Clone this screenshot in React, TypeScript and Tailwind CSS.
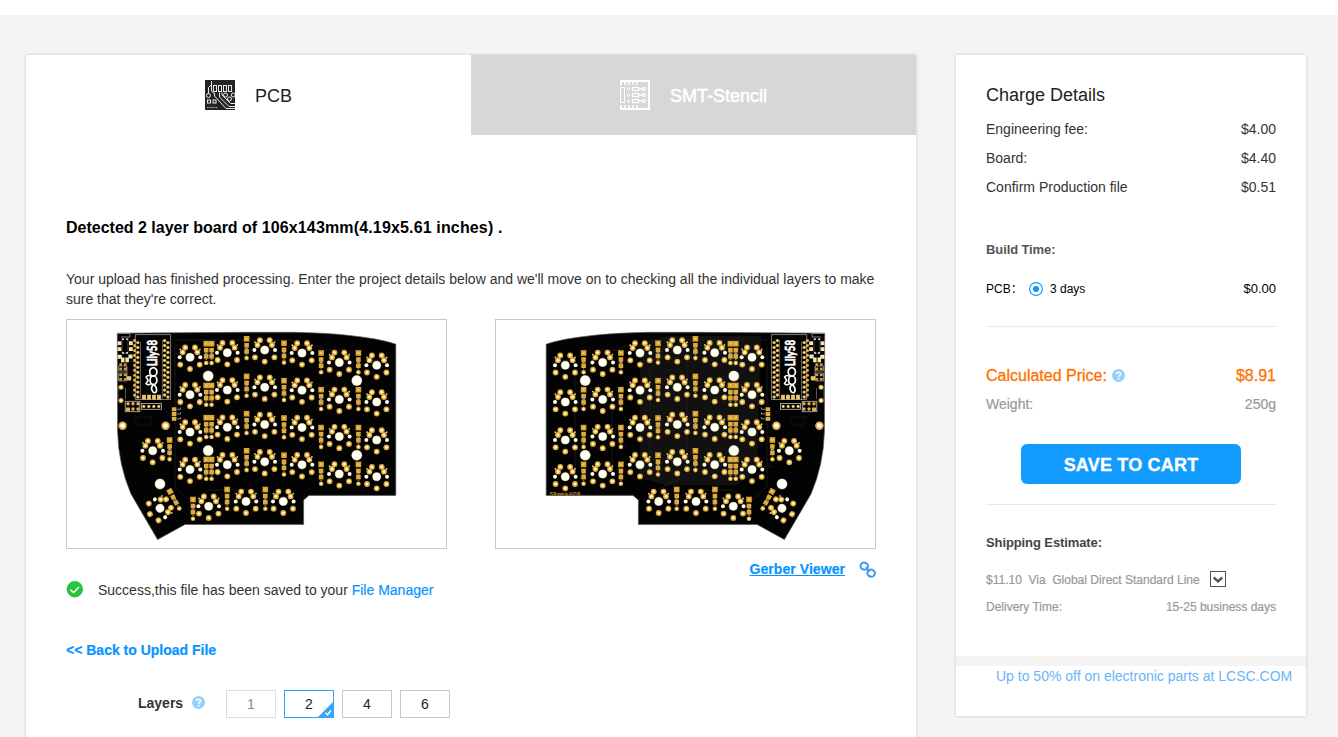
import type { ReactNode } from "react";

type Point = [number, number];

const KEYS: Point[] = [
  [190, 357.3], [190, 394.7], [190, 432], [190, 469.5],
  [227.3, 352.7], [227.3, 390], [227.3, 427.3], [227.3, 464.7],
  [264.7, 350], [264.7, 387.3], [264.7, 424.5], [264.7, 461.8],
  [302, 353], [302, 390.2], [302, 427.5], [302, 464.8],
  [339.3, 362.4], [339.3, 399.4], [339.3, 436.6], [339.3, 474],
  [376.7, 365.2], [376.7, 402], [376.7, 440], [376.7, 476.7],
  [208.7, 506.3], [246, 501.4], [283.3, 501.4], [152.7, 450.7],
];

const DIODES: Point[] = [
  [206.2, 343.7], [206.2, 385.5], [206.2, 417.7], [206.2, 459.5],
  [211.6, 343.7], [211.6, 385.5], [211.6, 417.7], [211.6, 459.5],
  [246.6, 338.8], [246.6, 376.4], [246.6, 413.7], [246.6, 450.8],
  [284, 343.3], [284, 380.7], [284, 418], [284, 455.2],
  [321.1, 353], [321.1, 389.7], [321.1, 427.6], [321.1, 464.4],
  [358.4, 353], [358.4, 389.7], [358.4, 427.6], [358.4, 464.4],
  [193, 499.5], [227.1, 489.5], [265.3, 489.5], [169.6, 440],
];

const HOLES: Point[] = [[208.2, 376], [356.8, 380.6], [356.8, 455.2], [208.2, 450.6], [160, 484]];
const MOUNTS: Point[] = [[122.6, 425.7], [165.6, 425.7]];
const PADS: Point[] = [[-4.8, -9.8], [5, -9.8], [-7.3, -5], [7.3, -5], [-9.7, 7.3], [9.7, 7.3], [0, 11.6]];

function Pad({ x, y, r = 2.9 }: { x: number; y: number; r?: number }) {
  return (
    <g>
      <circle cx={x} cy={y} r={r} fill="#dda935" />
      <circle cx={x} cy={y} r={r * 0.5} fill="#fff6da" />
    </g>
  );
}

function Switch({ x, y, rotate = 0 }: { x: number; y: number; rotate?: number }) {
  return (
    <g transform={`translate(${x} ${y}) rotate(${rotate})`}>
      <circle r="4.6" fill="#8c8556" />
      <circle r="4" fill="#fffff4" />
      <circle cx="-10.3" r="2" fill="#fffff4" />
      <circle cx="10.3" r="2" fill="#fffff4" />
      <circle cx="-9.7" cy="-7.8" r="0.9" fill="#e0d590" />
      <circle cx="9.9" cy="-7.8" r="0.9" fill="#e0d590" />
      {PADS.map(([px, py]) => <Pad key={`${px},${py}`} x={px} y={py} />)}
    </g>
  );
}

function Diode({ x, y, rotate = 0 }: { x: number; y: number; rotate?: number }) {
  return (
    <g transform={`translate(${x} ${y}) rotate(${rotate})`}>
      <rect x="-2.8" y="-2.8" width="5.6" height="5.6" fill="#d9a432" />
      <rect x="-1" y="-1" width="2" height="2" fill="#f0c766" />
      <rect x="-2.3" y="4.2" width="4.6" height="4.6" fill="#deaa3a" />
      <rect x="-1.4" y="9.1" width="2.8" height="0.9" fill="#c9ccd6" />
      <rect x="-2.3" y="10.4" width="4.6" height="4.6" fill="#deaa3a" />
      <rect x="-0.8" y="15.4" width="1.6" height="1" fill="#8d8f99" />
      <Pad x={0} y={19.3} r={2.3} />
    </g>
  );
}

function Controller() {
  const rows = Array.from({ length: 12 }, (_, i) => 342.6 + i * 4.95);
  return (
    <g>
      <path d="M135.3 399.5V334.6H170.6V399.5H135.3" fill="none" stroke="#9a9a9a" strokeWidth="0.8" />
      <path d="M140.5 399V342M162.4 399V340" stroke="#888" strokeWidth="0.7" />
      {rows.map((y) => (
        <g key={y} fill="#dfb04a">
          <circle cx="134.6" cy={y - 2} r="1.6" />
          <circle cx="137.8" cy={y} r="1.7" />
          <circle cx="164.6" cy={y - 2} r="1.7" />
          <circle cx="167.9" cy={y} r="1.7" />
          <circle cx="137.8" cy={y} r="0.6" fill="#fff" />
          <circle cx="167.9" cy={y} r="0.6" fill="#fff" />
          <circle cx="164.6" cy={y - 2} r="0.6" fill="#fff" />
        </g>
      ))}
      {[144, 149, 154, 159].map((x) => <rect key={x} x={x - 1.9} y="394.8" width="3.8" height="4.8" fill="#ecc872" />)}

      <path d="M117.5 333.5H130V337H121" fill="none" stroke="#999" strokeWidth="0.8" />
      <path d="M122 338V353H128V338" fill="none" stroke="#666" strokeWidth="0.7" />
      <g fill="#f8e3ab">
        <rect x="117.6" y="341.3" width="3.8" height="3.8" />
        <rect x="117.6" y="347.2" width="3.8" height="3.8" />
        <rect x="117.6" y="354.8" width="4.2" height="4" />
        <rect x="129" y="341.3" width="3.8" height="3.8" />
        <rect x="129" y="347.2" width="3.8" height="3.8" />
        <rect x="128.4" y="354.5" width="4.2" height="4" />
        <rect x="121" y="357.5" width="3.5" height="4.8" />
        <rect x="125.4" y="357.5" width="3.5" height="4.8" />
      </g>
      <g fill="#fff">
        <circle cx="123" cy="339.2" r="0.9" /><circle cx="127" cy="339.2" r="0.9" />
        <circle cx="123" cy="353" r="0.9" /><circle cx="127" cy="353" r="0.9" />
      </g>
      <path d="M118.5 366h8v5h-8zM118.5 373h8v8h-8zM127 366v14" fill="none" stroke="#8f8f8f" strokeWidth="0.8" />
      {[364.5, 368.8, 374.8, 379.2].map((y) => (
        <g key={y} fill="#cf9f3c">
          <rect x="119.3" y={y - 1.2} width="2.8" height="2.6" />
          <rect x="123.8" y={y - 1.2} width="2.8" height="2.6" />
        </g>
      ))}
      <rect x="127" y="376.2" width="4.2" height="4.2" fill="#f0c766" />
      <path d="M118 386V402M125.5 388V399" stroke="#777" strokeWidth="0.7" />
      <Pad x={121} y={387.3} r={2.5} />
      <Pad x={121} y={400.5} r={2.5} />

      <rect x="125.2" y="401.3" width="14.6" height="10.4" fill="none" stroke="#bcbcbc" strokeWidth="0.8" />
      <rect x="141.5" y="403.5" width="20" height="5.8" fill="none" stroke="#bcbcbc" strokeWidth="0.8" />
      {[128, 133, 138].map((x) => (
        <g key={x} fill="#e0b04a">
          <circle cx={x} cy="403.8" r="1.7" />
          {x === 128 ? <rect x="126" y="407.5" width="4" height="3.6" /> : <circle cx={x} cy="409" r="1.7" />}
        </g>
      ))}
      {[143.8, 148.8, 153.8, 158.8].map((x) => <Pad key={x} x={x} y={406.4} r={1.6} />)}
      {[409.3, 414, 418.8].map((y) => (
        <g key={y}>
          <rect x="171.8" y={y - 2} width="4.6" height="4" fill="#dfaf47" />
          <path d={`M177 ${y}h3.6v-1.8`} fill="none" stroke="#aaa" strokeWidth="0.8" />
        </g>
      ))}
    </g>
  );
}

function Logo({ x }: { x: number }) {
  return (
    <g transform={`translate(${x} 366) rotate(-90)`}>
      <text x="0" y="0" fill="#fff" stroke="#fff" strokeWidth="0.7" fontSize="13.5" textLength="26" lengthAdjust="spacingAndGlyphs" className="font-[Lato,sans-serif] font-bold">Lily58</text>
      <g fill="none" stroke="#fff" strokeWidth="1.7">
        <ellipse cx="-5.8" cy="-3.2" rx="4.2" ry="3.6" />
        <ellipse cx="-14.2" cy="-3" rx="4.2" ry="3.4" />
        <path d="M-18.4-3Q-22-6.6-25.8-3.6Q-28-1-25 0Q-21 .5-18.4-3" />
        <path d="M-17.6-5.5Q-20-8.5-17.5-10.5L-14.5-8.3L-11-10.4Q-8.3-8.6-10.4-5.4" strokeWidth="1.5" />
      </g>
    </g>
  );
}

function Board({ back = false }: { back?: boolean }) {
  return (
    <svg width="379" height="228" viewBox={back ? "496 320 379 228" : "67 320 379 228"} className="block">
      <g transform={back ? "translate(942 0) scale(-1 1)" : undefined}>
        <path
          d="M117.3 333.2L240 332.3H294Q325 333 345 335Q380 338.5 395.8 344.2V495.4H309L303.6 500V524.4H185L157.6 539.6L131 494Q118.5 465 117.6 432Z"
          fill="#030303"
          stroke="#555"
          strokeWidth="0.7"
        />
        {back && (
          <>
            <path d="M181 336H272L302 342V478L275 485H205L185 470Z" fill="#111" />
            <path d="M209 350V380M255 355V475L285 490M292 370V470M367 372V472M330 400V470M185 466H170" fill="none" stroke="#202020" strokeWidth="0.8" />
          </>
        )}
        <path d="M175 345V487L188 499H200L208 490H255M175 340H290L304 346H318L325 350H345" fill="none" stroke="#191919" strokeWidth="1" />
        <path d="M166 411L172 418M135 417h16v8h-12z" fill="none" stroke="#171717" strokeWidth="0.8" />
        {KEYS.map(([x, y]) => <Switch key={`${x},${y}`} x={x} y={y} />)}
        <Switch x={160} y={508.3} rotate={60} />
        {DIODES.map(([x, y]) => <Diode key={`${x},${y}`} x={x} y={y} />)}
        <Diode x={170} y={491.5} rotate={-28.6} />
        {HOLES.map(([x, y]) => (
          <g key={`${x},${y}`}>
            <circle cx={x} cy={y} r="5.5" fill="#77734f" />
            <circle cx={x} cy={y} r="5" fill="#fffff5" />
          </g>
        ))}
        {MOUNTS.map(([x, y]) => (
          <g key={`${x},${y}`}>
            <circle cx={x} cy={y} r="4.2" fill="#e1b14c" />
            <circle cx={x} cy={y} r="2.4" fill="#fffdf0" />
          </g>
        ))}
        <Controller />
      </g>
      <Logo x={back ? 795 : 156.5} />
      {back && <text x="550" y="494.6" fill="#e0a61e" fontSize="4" textLength="30" lengthAdjust="spacingAndGlyphs" className="font-['Liberation_Sans',sans-serif] font-bold">PCB made by JLCPCB</text>}
    </svg>
  );
}

function Help({ className = "" }: { className?: string }) {
  return (
    <svg width="13" height="13" viewBox="0 0 13 13" className={className}>
      <circle cx="6.5" cy="6.5" r="6.5" fill="#94d0fb" />
      <path d="M4.5 5.1C4.5 2.6 8.6 2.6 8.6 5C8.6 6.4 6.6 6.3 6.6 7.9" fill="none" stroke="#fff" strokeWidth="1.6" />
      <rect x="5.7" y="8.9" width="1.8" height="1.6" fill="#fff" />
    </svg>
  );
}

function PcbIcon() {
  return (
    <svg width="30" height="30" viewBox="0 0 30 30">
      <rect width="30" height="30" fill="#242424" />
      <g fill="none" stroke="#e9e9e9" strokeWidth="1">
        <path d="M3.5 13.5V7.5L6.5 4.5V1M14.5 12.5V17L24 26.5H30M9.5 13V16L21 28.5H30M17 12.5V15L25.5 23.5H30M6.5 4V11L9.5 14" />
        <rect x="8.5" y="5.5" width="3" height="6" /><rect x="13.5" y="5.5" width="3" height="6" />
        <rect x="18.5" y="5.5" width="3" height="6" /><rect x="23.5" y="5.5" width="3" height="6" />
        <circle cx="3.5" cy="15.5" r="2" /><circle cx="20.5" cy="15" r="2" /><circle cx="28.3" cy="15" r="2" /><circle cx="24.5" cy="19" r="2" />
        <rect x="2.5" y="20" width="3" height="3" /><rect x="8" y="20" width="3" height="3" />
      </g>
      <path d="M2 27.5H13" stroke="#aaa" strokeWidth="1" strokeDasharray="1.5 .7" />
    </svg>
  );
}

function StencilIcon() {
  return (
    <svg width="30" height="30" viewBox="0 0 30 30" fill="none" stroke="#fff">
      <path d="M1 5V1H29V29H1V25" strokeWidth="2" />
      <path d="M5 2V5M9 2V5M13 2V5M17 2V5M5 25V28M9 25V28M13 25V28M17 25V28" strokeWidth="1.5" />
      <rect x="0.5" y="7.5" width="4" height="15" />
      {[9, 15, 21].map((y) => (
        <g key={y}>
          <circle cx="8.5" cy={y} r="1.2" strokeWidth="0.9" />
          <rect x="12.5" y={y - 1.5} width="6" height="3" strokeWidth="1.2" />
          <path d={`M19 ${y}H23`} strokeWidth="1.4" />
          <circle cx="24" cy={y} r="1.4" strokeWidth="1.2" />
        </g>
      ))}
    </svg>
  );
}

function Row({ label, value, className = "" }: { label: ReactNode; value: ReactNode; className?: string }) {
  return (
    <div className={`flex justify-between ${className}`}>
      <span>{label}</span>
      <span>{value}</span>
    </div>
  );
}

function LayerOption({ value, selected = false, disabled = false }: { value: number; selected?: boolean; disabled?: boolean }) {
  const tone = selected ? "border-[#2ea3f7] text-[#222]" : disabled ? "border-[#dcdcdc] text-[#888]" : "border-[#c8c8c8] text-[#222]";
  return (
    <button className={`relative h-7 w-[50px] border bg-white text-sm leading-[27px] ${tone}`}>
      {value}
      {selected && (
        <svg width="17" height="17" viewBox="0 0 17 17" className="absolute -right-px -bottom-px">
          <path d="M17 0V17H0Z" fill="#35a7fa" />
          <path d="M8.5 11.8L10.5 13.8L14 9.5" fill="none" stroke="#fff" strokeWidth="1.5" />
        </svg>
      )}
    </button>
  );
}

function MainPanel() {
  return (
    <main className="h-[700px] w-[890px] shrink-0 bg-white shadow-[0_0_3px_rgba(0,0,0,0.2)]">
      <nav className="flex h-20 text-lg">
        <div className="flex w-[445px] items-center gap-5 pl-[179px] text-[#222]"><PcbIcon /><span className="pt-0.5">PCB</span></div>
        <div className="flex w-[445px] items-center gap-5 bg-[#d7d7d7] pl-[149px] text-white"><StencilIcon /><span className="pt-0.5 [-webkit-text-stroke:0.5px_white]">SMT-Stencil</span></div>
      </nav>
      <div className="px-10 pt-[83px]">
        <h1 className="text-base leading-5 font-bold whitespace-nowrap text-black">
          Detected 2 layer board of <span className="tracking-[0.15px]">106x143mm(4.19x5.61 inches) .</span>
        </h1>
        <p className="mt-[31px] text-sm leading-5 whitespace-nowrap">
          Your upload has finished processing. Enter the project details below and we'll move on to checking all the individual layers to make<br />
          sure that they're correct.
        </p>
        <div className="mt-[10px] flex justify-between">
          <div className="border border-[#c8c8c8]"><Board /></div>
          <div className="border border-[#c8c8c8]"><Board back /></div>
        </div>
        <div className="flex h-[60px] justify-between text-sm">
          <div className="flex items-center gap-[15px] pt-[21px]">
            <svg width="17" height="17" viewBox="0 0 17 17">
              <circle cx="8.8" cy="8.3" r="8.2" fill="#2bc23f" />
              <path d="M4.4 8.7L7.6 11.6L13 6" fill="none" stroke="#fff" strokeWidth="1.4" />
            </svg>
            <span>Success,this file has been saved to your <a className="text-[#0695ff] [-webkit-text-stroke:0.2px_#0695ff]">File Manager</a></span>
          </div>
          <div className="flex h-10 items-center gap-[14px]">
            <a className="font-bold tracking-[0.06px] text-[#0695ff] underline [-webkit-text-stroke:0.2px_#0695ff]">Gerber Viewer</a>
            <svg width="17" height="17" viewBox="0 0 17 17" fill="none" stroke="#4199f5" strokeWidth="2">
              <rect x="1.6" y="1.7" width="7.4" height="6.8" rx="3.2" transform="rotate(20 5.2 5)" />
              <rect x="8.4" y="8.8" width="7.4" height="6.8" rx="3.2" transform="rotate(20 12.2 12.2)" />
              <path d="M6.6 6.4L10.8 10.6" strokeWidth="1.6" />
            </svg>
          </div>
        </div>
        <a className="mt-[31px] block text-sm leading-5 font-bold text-[#0695ff] [-webkit-text-stroke:0.2px_#0695ff]">&lt;&lt; Back to Upload File</a>
        <div className="mt-[30px] flex items-center gap-2 pl-[72px]">
          <span className="w-[46px] pb-0.5 text-sm leading-5 font-bold">Layers</span>
          <Help className="mr-[13px] mb-[3px]" />
          <LayerOption value={1} disabled />
          <LayerOption value={2} selected />
          <LayerOption value={4} />
          <LayerOption value={6} />
        </div>
      </div>
    </main>
  );
}

function ChargePanel() {
  return (
    <aside className="h-[661px] w-[350px] shrink-0 bg-white shadow-[0_0_3px_rgba(0,0,0,0.2)]">
      <div className="h-[601px] px-[30px] pt-[30px]">
        <h2 className="text-lg leading-5 text-[#222]">Charge Details</h2>
        <div className="mt-[10px] text-sm leading-[29px]">
          <Row label="Engineering fee:" value="$4.00" />
          <Row label="Board:" value="$4.40" />
          <Row label="Confirm Production file" value="$0.51" />
        </div>
        <h3 className="mt-[38px] text-[13px] leading-5 font-bold tracking-[-0.1px] text-[#555]">Build Time:</h3>
        <Row
          className="mt-[19px] h-5 items-center text-xs leading-5 text-black"
          label={
            <span className="flex items-center">
              <span className="w-[43px]">PCB：</span>
              <svg width="14" height="14" viewBox="0 0 14 14" className="mr-[7px]">
                <circle cx="7" cy="7" r="6.4" fill="none" stroke="#109cec" strokeWidth="1.1" />
                <circle cx="7" cy="7" r="3" fill="#109cec" />
              </svg>
              3 days
            </span>
          }
          value={<span className="text-[13px]">$0.00</span>}
        />
        <hr className="mt-[27px] border-[#eaeaea]" />
        <Row
          className="mt-[39px] text-base leading-5 text-[#ff7100] [-webkit-text-stroke:0.3px_#ff7100]"
          label={<span className="flex items-center gap-[5px]">Calculated Price:<Help className="mb-0.5" /></span>}
          value="$8.91"
        />
        <Row className="mt-2 text-sm leading-5 text-[#999] [-webkit-text-stroke:0.2px_#999]" label="Weight:" value="250g" />
        <button className="mx-auto mt-[30px] block h-10 w-[220px] rounded-md bg-[#119bff] pt-px text-lg font-bold tracking-[0.2px] text-white [-webkit-text-stroke:0.3px_white]">SAVE TO CART</button>
        <hr className="mt-5 border-[#eaeaea]" />
        <h3 className="mt-7 text-[13px] leading-5 font-bold tracking-[-0.1px] text-[#444]">Shipping Estimate:</h3>
        <div className="mt-[17px] flex h-5 items-center text-xs text-[#999]">
          <span className="whitespace-pre [-webkit-text-stroke:0.2px_#999]">$11.10  Via  Global Direct Standard Line</span>
          <svg width="16" height="16" viewBox="0 0 16 16" className="mb-[3px] ml-[10px]">
            <rect x="0.5" y="0.5" width="15" height="15" fill="#fff" stroke="#555" />
            <path d="M3.8 6.5L8 10.4L12.2 6.5" fill="none" stroke="#555" strokeWidth="2.5" />
          </svg>
        </div>
        <Row className="mt-[7px] text-xs leading-5 text-[#999] [-webkit-text-stroke:0.2px_#999]" label="Delivery Time:" value="15-25 business days" />
      </div>
      <div className="h-[10px] bg-[#f4f4f4]" />
      <a className="block pl-10 text-sm leading-5 whitespace-nowrap text-[#69b4f8]">Up to 50% off on electronic parts at LCSC.COM</a>
    </aside>
  );
}

export default function App() {
  return (
    <div className="h-[737px] w-[1338px] overflow-hidden bg-[#f4f4f4] font-['Liberation_Sans','Noto_Sans_CJK_SC',sans-serif] text-[#333]">
      <div className="h-[15px] bg-white" />
      <div className="flex items-start gap-10 pt-10 pl-[26px]">
        <MainPanel />
        <ChargePanel />
      </div>
    </div>
  );
}
